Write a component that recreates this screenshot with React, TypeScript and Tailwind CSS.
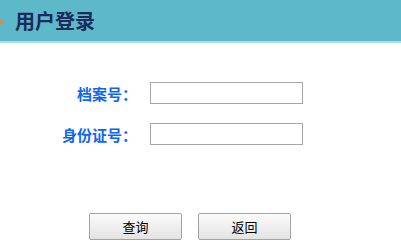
import React from "react";

export default function App() {
  const font = { fontFamily: '"Noto Sans CJK SC", "Liberation Sans", sans-serif' };
  return (
    <div className="w-[401px] h-[249px] bg-white overflow-hidden" style={font}>
      <div className="relative h-[41px] bg-[#5db9c9] flex items-center pl-[15px]">
        <div className="absolute left-0 top-[19px] w-0 h-0 border-y-[3px] border-y-transparent border-l-[4px] border-l-[#e08a3a]" />
        <span className="text-[20px] font-bold text-[#1b2b5b] leading-none">用户登录</span>
      </div>
      <div className="h-[2px] bg-[#a9dce5]" />
      <div className="flex flex-col gap-[19px] mt-[39px]">
        <div className="flex items-center">
          <div className="w-[140px] text-right pr-[3px] text-[15px] font-bold text-[#0c66f5] leading-none">档案号：</div>
          <input className="ml-[10px] w-[153px] h-[22px] border border-[#a6a6a6] outline-none" />
        </div>
        <div className="flex items-center">
          <div className="w-[140px] text-right pr-[3px] text-[15px] font-bold text-[#0c66f5] leading-none">身份证号：</div>
          <input className="ml-[10px] w-[153px] h-[22px] border border-[#a6a6a6] outline-none" />
        </div>
      </div>
      <div className="flex gap-[16px] ml-[89px] mt-[68px]">
        <button className="w-[93px] h-[27px] border border-[#a3a3a3] rounded-[2px] bg-gradient-to-b from-[#fbfbfb] to-[#e3e3e3] text-[13px] text-black leading-none">查询</button>
        <button className="w-[93px] h-[27px] border border-[#a3a3a3] rounded-[2px] bg-gradient-to-b from-[#fbfbfb] to-[#e3e3e3] text-[13px] text-black leading-none">返回</button>
      </div>
    </div>
  );
}
